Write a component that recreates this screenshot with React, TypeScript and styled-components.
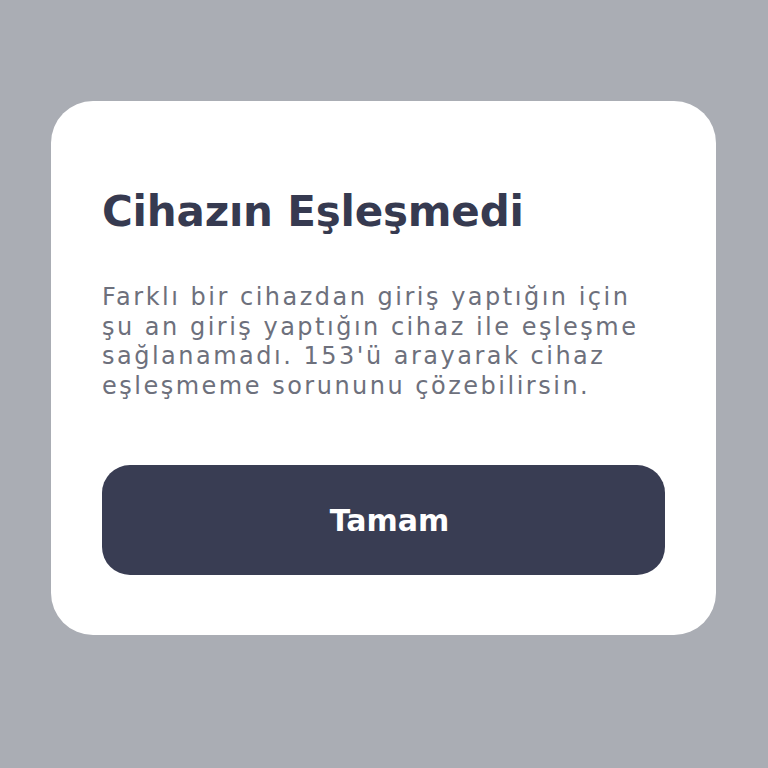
import { createGlobalStyle, styled } from "styled-components";

const GlobalStyle = createGlobalStyle`
    html, body {
        margin: 0;
        padding: 0;
        background: #aaadb4;
    }
    #root {
        min-height: 768px;
    }
`;

//Fundo cinza que centraliza o cartão
const Overlay = styled.div`
    width: 768px;
    height: 768px;
    box-sizing: border-box;
    padding: 101px 52px 0 51px;
    font-family: "DejaVu Sans", "Liberation Sans", sans-serif;
`;

const Card = styled.div`
    background: #ffffff;
    border-radius: 42px;
    height: 534px;
    box-sizing: border-box;
    padding: 86px 51px 0 51px;
    display: flex;
    flex-direction: column;
`;

const Title = styled.h1`
    margin: 0;
    font-size: 42px;
    font-weight: 700;
    line-height: 50px;
    color: #363a50;
    letter-spacing: -0.2px;
`;

const Message = styled.p`
    margin: 46px 0 0 0;
    font-size: 24px;
    line-height: 29.5px;
    color: #6d707c;
    letter-spacing: 2.5px;
    white-space: nowrap;
`;

const Button = styled.button`
    margin-top: 64px;
    height: 110px;
    padding: 0 0 0 12px;
    border: none;
    border-radius: 28px;
    background: #393d53;
    color: #ffffff;
    font-family: inherit;
    font-size: 30px;
    font-weight: 700;
    cursor: pointer;
`;

const App = () => {
    return (
        <>
            <GlobalStyle />
            <Overlay>
                <Card>
                    <Title>Cihazın Eşleşmedi</Title>
                    <Message>
                        Farklı bir cihazdan giriş yaptığın için<br />
                        şu an giriş yaptığın cihaz ile eşleşme<br />
                        sağlanamadı. 153'ü arayarak cihaz<br />
                        eşleşmeme sorununu çözebilirsin.
                    </Message>
                    <Button>Tamam</Button>
                </Card>
            </Overlay>
        </>
    );
}

export default App;
